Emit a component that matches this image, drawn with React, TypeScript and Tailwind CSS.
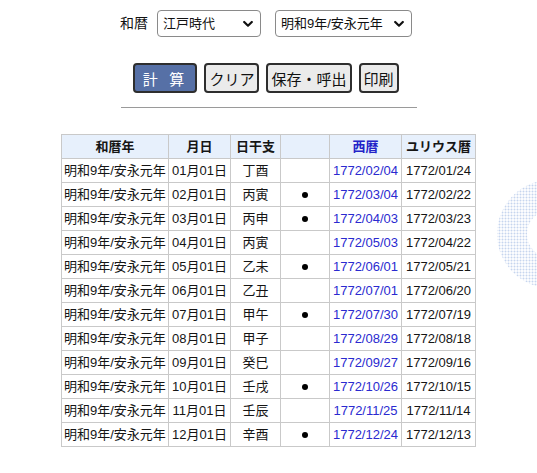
import React from "react";

type Row = {
  month: string;
  kanshi: string;
  mark: boolean;
  seireki: string;
  julian: string;
};

const rows: Row[] = [
  { month: "01月01日", kanshi: "丁酉", mark: false, seireki: "1772/02/04", julian: "1772/01/24" },
  { month: "02月01日", kanshi: "丙寅", mark: true, seireki: "1772/03/04", julian: "1772/02/22" },
  { month: "03月01日", kanshi: "丙申", mark: true, seireki: "1772/04/03", julian: "1772/03/23" },
  { month: "04月01日", kanshi: "丙寅", mark: false, seireki: "1772/05/03", julian: "1772/04/22" },
  { month: "05月01日", kanshi: "乙未", mark: true, seireki: "1772/06/01", julian: "1772/05/21" },
  { month: "06月01日", kanshi: "乙丑", mark: false, seireki: "1772/07/01", julian: "1772/06/20" },
  { month: "07月01日", kanshi: "甲午", mark: true, seireki: "1772/07/30", julian: "1772/07/19" },
  { month: "08月01日", kanshi: "甲子", mark: false, seireki: "1772/08/29", julian: "1772/08/18" },
  { month: "09月01日", kanshi: "癸巳", mark: false, seireki: "1772/09/27", julian: "1772/09/16" },
  { month: "10月01日", kanshi: "壬戌", mark: true, seireki: "1772/10/26", julian: "1772/10/15" },
  { month: "11月01日", kanshi: "壬辰", mark: false, seireki: "1772/11/25", julian: "1772/11/14" },
  { month: "12月01日", kanshi: "辛酉", mark: true, seireki: "1772/12/24", julian: "1772/12/13" },
];

function Chevron() {
  return (
    <svg width="10" height="7" viewBox="0 0 10 7" className="pointer-events-none absolute right-[8px] top-1/2 -translate-y-1/2">
      <path d="M1.2 1.5 L5 5.2 L8.8 1.5" fill="none" stroke="#111" strokeWidth="2.2" strokeLinecap="round" strokeLinejoin="round" />
    </svg>
  );
}

function Select({ value, width }: { value: string; width: string }) {
  return (
    <div className={`relative ${width}`}>
      <select
        defaultValue={value}
        className="h-[27px] w-full appearance-none rounded-[4px] border border-[#8a8a8a] bg-white pl-[5px] pr-[22px] text-[13px] text-[#111] outline-none"
      >
        <option>{value}</option>
      </select>
      <Chevron />
    </div>
  );
}

// Dotted ring ornament at the right edge of the page
function DottedRing() {
  return (
    <svg width="60" height="120" viewBox="0 0 60 120" className="pointer-events-none absolute right-0 top-[172px]">
      <defs>
        <pattern id="dots" width="3" height="3" patternUnits="userSpaceOnUse">
          <circle cx="1.5" cy="1.5" r="1" fill="#c6d5ee" />
        </pattern>
      </defs>
      <path
        fillRule="evenodd"
        fill="url(#dots)"
        d="M 74 62 m -54 0 a 54 54 0 1 0 108 0 a 54 54 0 1 0 -108 0 Z M 74 62 m -24 0 a 24 24 0 1 0 48 0 a 24 24 0 1 0 -48 0 Z"
      />
    </svg>
  );
}

export default function App() {
  const jp = { fontFamily: '"Liberation Sans", "Noto Sans CJK JP", sans-serif' };
  const cell = "border border-[#c9c9c9] h-[24px] px-[2px] py-0 leading-[22px]";
  return (
    <div className="relative min-h-[473px] w-full overflow-hidden bg-white text-[#111]" style={jp}>
      <DottedRing />
      <div className="flex flex-col items-center">
        <div className="mt-[10px] flex items-center pr-[5px]">
          <span className="mr-[9px] text-[14px]">和暦</span>
          <Select value="江戸時代" width="w-[104px]" />
          <div className="w-[14px]" />
          <Select value="明和9年/安永元年" width="w-[137px]" />
        </div>

        <div className="mt-[26px] flex items-center gap-[7px] pr-[5px] text-[15px]" style={{ fontFamily: '"Noto Sans CJK JP", sans-serif' }}>
          <button className="h-[30px] w-[64px] rounded-[4px] border-2 border-[#2e2e2e] bg-[#5670a6] tracking-[4px] text-white leading-none">
            計 算
          </button>
          <button className="h-[30px] rounded-[4px] border-2 border-[#2e2e2e] bg-[#ebebeb] px-[3px] leading-none">クリア</button>
          <button className="h-[30px] rounded-[4px] border-2 border-[#2e2e2e] bg-[#ebebeb] px-[3px] leading-none">保存・呼出</button>
          <button className="h-[30px] rounded-[4px] border-2 border-[#2e2e2e] bg-[#ebebeb] px-[3px] leading-none">印刷</button>
        </div>

        <div className="mt-[14px] h-px w-[296px] bg-[#9a9a9a]" />

        <table className="mt-[26px] table-fixed border-collapse text-[13px] text-[#151515]" style={{ width: 414 }}>
          <colgroup>
            <col style={{ width: 107 }} />
            <col style={{ width: 62 }} />
            <col style={{ width: 50 }} />
            <col style={{ width: 49 }} />
            <col style={{ width: 72 }} />
            <col style={{ width: 74 }} />
          </colgroup>
          <thead>
            <tr className="bg-[#e7f0fc] font-bold">
              <th className={`${cell} text-center`}>和暦年</th>
              <th className={`${cell} text-center`}>月日</th>
              <th className={`${cell} text-center`}>日干支</th>
              <th className={cell}></th>
              <th className={`${cell} text-center text-[#2323c8]`}>西暦</th>
              <th className={`${cell} text-center`}>ユリウス暦</th>
            </tr>
          </thead>
          <tbody>
            {rows.map((r) => (
              <tr key={r.month}>
                <td className={`${cell} whitespace-nowrap text-left`}>明和9年/安永元年</td>
                <td className={`${cell} text-center`}>{r.month}</td>
                <td className={`${cell} text-center`}>{r.kanshi}</td>
                <td className={`${cell} text-center`}>
                  {r.mark ? <span className="inline-block h-[6px] w-[6px] rounded-full bg-black align-middle" /> : null}
                </td>
                <td className={`${cell} text-center text-[#2a2ad0]`}>{r.seireki}</td>
                <td className={`${cell} text-center`}>{r.julian}</td>
              </tr>
            ))}
          </tbody>
        </table>
      </div>
    </div>
  );
}
